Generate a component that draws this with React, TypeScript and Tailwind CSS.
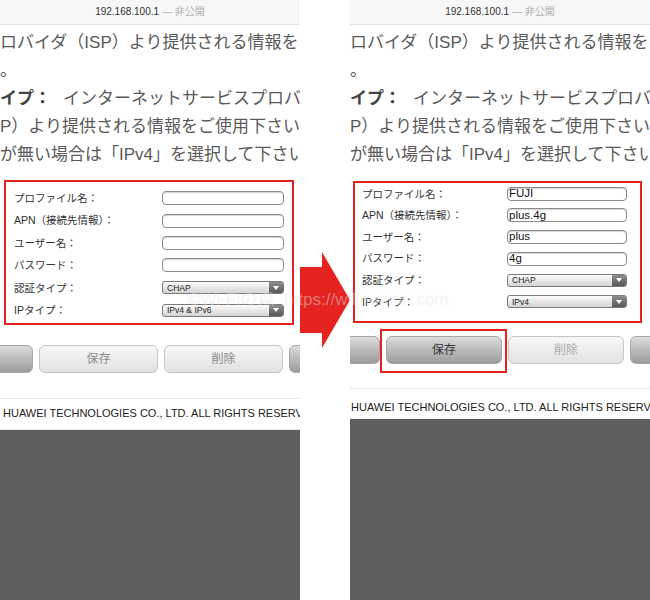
type Side = "left" | "right";

const FONT = "font-['Liberation_Sans','Noto_Sans_CJK_JP',sans-serif]";

const LABELS = [
  "プロファイル名：",
  "APN（接続先情報）：",
  "ユーザー名：",
  "パスワード：",
  "認証タイプ：",
  "IPタイプ：",
];

function UrlBar() {
  return (
    <div className="flex h-[25px] shrink-0 items-center justify-center border-b border-[#e2e2e2] bg-[#f7f7f7] text-[10px] leading-none">
      <span className="text-[#333]">192.168.100.1</span>
      <span className="ml-[3px] text-[#b0b0b0]">— 非公開</span>
    </div>
  );
}

function Intro() {
  return (
    <div className="shrink-0 whitespace-nowrap pt-[4px] text-[17px] leading-[28px] text-[#5a5a5a]">
      <div className="-ml-[17px]">プロバイダ（ISP）より提供される情報を</div>
      <div className="-ml-[17px]">い。</div>
      <div className="-ml-[17px]">
        <span className="font-bold text-[#444]">タイプ：</span>
        <span className="pl-[12px]">インターネットサービスプロバイダ</span>
      </div>
      <div>P）より提供される情報をご使用下さい。</div>
      <div>が無い場合は「IPv4」を選択して下さい。</div>
    </div>
  );
}

function TextField({ value }: { value?: string }) {
  return (
    <div className="flex h-[14px] items-center rounded-[4px] border border-[#8c8c8c] bg-white pl-[1px] text-[11.5px] leading-none text-[#111] shadow-[inset_0_1px_1px_rgba(0,0,0,0.18)]">
      {value}
    </div>
  );
}

function SelectField({ value }: { value: string }) {
  return (
    <div className="flex h-[13px] overflow-hidden rounded-[3px] border border-[#7a7a7a] bg-linear-to-b from-[#fdfdfd] to-[#d4d4d4]">
      <div className="flex flex-1 items-center pl-[4px] text-[8.5px] leading-none text-[#222]">{value}</div>
      <div className="flex w-[14px] items-center justify-center bg-linear-to-b from-[#8e8e8e] to-[#585858]">
        <svg width="6" height="4" viewBox="0 0 6 4">
          <polygon points="0,0 6,0 3,4" fill="#fff" />
        </svg>
      </div>
    </div>
  );
}

function ProfileForm({ side }: { side: Side }) {
  const left = side === "left";
  const values = left ? ["", "", "", ""] : ["FUJI", "plus.4g", "plus", "4g"];
  const selects = left ? ["CHAP", "IPv4 & IPv6"] : ["CHAP", "IPv4"];
  const rowH = left ? "h-[22.4px]" : "h-[21.6px]";

  return (
    <div
      className={
        left
          ? "mt-[11px] ml-[4px] h-[145px] w-[290px] shrink-0 border-2 border-[#e3211f] pt-[5px]"
          : "mt-[12px] ml-[3px] h-[142px] w-[289px] shrink-0 border-2 border-[#e3211f] pt-0"
      }
    >
      {LABELS.map((label, i) => (
        <div key={label} className={`flex items-center ${rowH}`}>
          <div className={`${left ? "pl-[8px]" : "pl-[7px]"} text-[10.5px] leading-none text-[#333]`}>
            {label}
          </div>
          <div className={`ml-auto ${left ? "mr-[8px] w-[122px]" : "mr-[13px] w-[120px]"}`}>
            {i < 4 ? <TextField value={values[i]} /> : <SelectField value={selects[i - 4]} />}
          </div>
        </div>
      ))}
    </div>
  );
}

function Btn({ label, pressed, faint, width }: { label?: string; pressed?: boolean; faint?: boolean; width: string }) {
  return (
    <div
      className={`flex h-[28px] shrink-0 items-center justify-center rounded-[6px] border text-[12px] ${width} ${
        pressed
          ? "border-[#a8a8a8] bg-linear-to-b from-[#dcdcdc] to-[#9c9c9c] text-[#333]"
          : `border-[#c6c6c6] bg-linear-to-b from-[#f8f8f8] to-[#e2e2e2] ${faint ? "text-[#aaa]" : "text-[#8a8a8a]"}`
      }`}
    >
      {label}
    </div>
  );
}

function Buttons({ side }: { side: Side }) {
  if (side === "left") {
    return (
      <div className="mt-[20px] -ml-[86px] flex shrink-0 gap-[6px]">
        <Btn pressed width="w-[119px]" />
        <Btn label="保存" width="w-[119px]" />
        <Btn label="削除" width="w-[119px]" />
        <Btn pressed width="w-[119px]" />
      </div>
    );
  }
  return (
    <div className="mt-[13px] -ml-[86px] flex shrink-0 gap-[6px]">
      <Btn pressed width="w-[116px]" />
      <div className="relative">
        <Btn label="保存" pressed width="w-[116px]" />
        <div className="absolute -top-[7px] -right-[5px] -bottom-[9px] -left-[6px] border-2 border-[#e3211f]" />
      </div>
      <Btn label="削除" faint width="w-[116px]" />
      <Btn pressed width="w-[116px]" />
    </div>
  );
}

function Footer({ side }: { side: Side }) {
  const left = side === "left";
  return (
    <div
      className={
        left
          ? "mt-[25px] h-[32px] shrink-0 border-y border-[#e6e6e6] pt-[7px] pl-[3px]"
          : "mt-[24px] h-[31px] shrink-0 border-t border-[#e6e6e6] pt-[11px] pl-[1px]"
      }
    >
      <div className="whitespace-nowrap text-[11px] leading-[14px] text-[#222]">
        HUAWEI TECHNOLOGIES CO., LTD. ALL RIGHTS RESERVED.
      </div>
    </div>
  );
}

function Phone({ side }: { side: Side }) {
  return (
    <div className="flex h-[600px] w-[300px] shrink-0 flex-col overflow-hidden bg-white">
      <UrlBar />
      <Intro />
      <ProfileForm side={side} />
      <Buttons side={side} />
      <Footer side={side} />
      <div className={`flex-1 bg-[#5f5f5f] ${side === "right" ? "border-t border-[#555]" : ""}`} />
    </div>
  );
}

export default function App() {
  return (
    <div className={`relative flex h-[600px] w-[650px] overflow-hidden bg-white ${FONT}`}>
      <Phone side="left" />
      <div className="w-[50px] shrink-0" />
      <Phone side="right" />

      {/* red arrow between the two screenshots */}
      <svg className="absolute top-[250px] left-[298px]" width="54" height="100" viewBox="0 0 54 100">
        <polygon points="2,17 24,17 24,2 52,50 24,98 24,83 2,83" fill="#e52421" />
      </svg>

      {/* watermark */}
      <div className="pointer-events-none absolute top-[288px] left-[188px] whitespace-nowrap text-[17px] leading-[24px] text-white/40 [text-shadow:0_0_1px_rgba(0,0,0,0.08)]">
        <span>©Wi-Fiの森</span>
        <span className="ml-[10px]">https://wifinomori.com</span>
      </div>
    </div>
  );
}
